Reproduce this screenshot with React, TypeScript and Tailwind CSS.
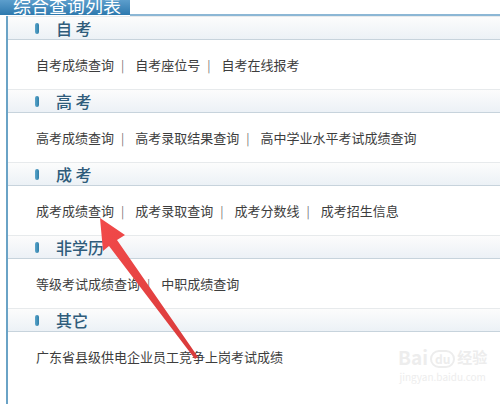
import React from "react";

type Section = { title: string; items: string[] };

const sections: Section[] = [
  { title: "自 考", items: ["自考成绩查询", "自考座位号", "自考在线报考"] },
  { title: "高 考", items: ["高考成绩查询", "高考录取结果查询", "高中学业水平考试成绩查询"] },
  { title: "成 考", items: ["成考成绩查询", "成考录取查询", "成考分数线", "成考招生信息"] },
  { title: "非学历", items: ["等级考试成绩查询", "中职成绩查询"] },
  { title: "其它", items: ["广东省县级供电企业员工竞争上岗考试成绩"] },
];

function Header({ title }: { title: string }) {
  return (
    <div className="h-[24px] flex items-center border-t border-b border-t-[#e7eaec] border-b-[#c7d3dc] bg-gradient-to-b from-[#fcfcfc] to-[#ecf1f6]">
      <div className="ml-[27px] w-[4px] h-[11px] rounded-full bg-gradient-to-r from-[#5aa6cc] to-[#2f7fa8]" />
      <div className="ml-[17px] text-[16px] leading-[20px] text-[#2f5c7b] font-medium whitespace-pre">
        {title}
      </div>
    </div>
  );
}

function Row({ items }: { items: string[] }) {
  return (
    <div className="h-[49px] flex items-center pl-[28px] text-[13px] text-[#3d3d3d]">
      {items.map((it, i) => (
        <React.Fragment key={i}>
          {i > 0 && <span className="ml-[7px] mr-[11px] text-[#777] text-[12px]">|</span>}
          <span>{it}</span>
        </React.Fragment>
      ))}
    </div>
  );
}

export default function App() {
  return (
    <div
      className="relative w-[500px] h-[404px] bg-white overflow-hidden"
      style={{ fontFamily: '"Noto Sans CJK SC", "Noto Sans", sans-serif' }}
    >
      <div className="flex h-[16px]">
        <div className="w-[130px] h-[15px] overflow-hidden bg-gradient-to-b from-[#5c9ecc] to-[#2d79ae]">
          <div className="-mt-[6px] pl-[13px] text-[18px] leading-[22px] text-white">
            综合查询列表
          </div>
        </div>
        <div className="flex-1 h-[16px] border-b-2 border-[#8cb7d5]" />
      </div>
      <div className="ml-[6px] h-[388px] border-l-2 border-[#6aa3c6]">
        {sections.map((s, i) => (
          <div key={i}>
            <Header title={s.title} />
            <Row items={s.items} />
          </div>
        ))}
      </div>

      {/* Baidu watermark */}
      <div className="absolute left-[398px] top-[346px] flex flex-col items-center text-[#ededed] select-none">
        <div className="flex items-end text-[19px] leading-[22px] font-bold">
          <span>Bai</span>
          <span className="mx-[2px] text-[12px] border-2 border-[#ededed] rounded-full px-[3px] leading-[14px]">du</span>
          <span className="text-[15px]">经验</span>
        </div>
        <div className="text-[10px] leading-[14px] mt-[2px]">jingyan.baidu.com</div>
      </div>

      {/* red arrow */}
      <svg className="absolute left-0 top-0" width="500" height="404" viewBox="0 0 500 404">
        <defs>
          <linearGradient id="ar" x1="0" y1="0" x2="1" y2="1">
            <stop offset="0" stopColor="#f24a4a" />
            <stop offset="1" stopColor="#d83a3a" />
          </linearGradient>
        </defs>
        <polygon
          points="100,218 125,235 117,240 198,357 195,359 109,246 103,251"
          fill="url(#ar)"
        />
      </svg>
    </div>
  );
}
